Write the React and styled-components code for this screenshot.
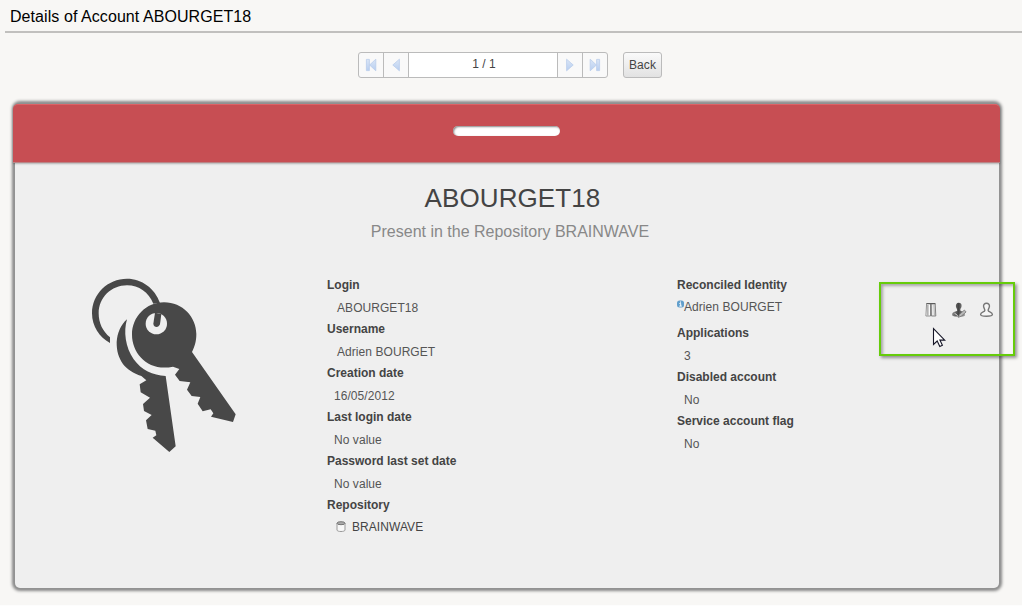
import React from "react";
import styled, { createGlobalStyle } from "styled-components";

const GlobalStyle = createGlobalStyle`
  * { box-sizing: border-box; }
  html, body { margin: 0; padding: 0; }
  body {
    background: #f8f7f5;
    font-family: "Liberation Sans", Arial, sans-serif;
    overflow: hidden;
  }
`;

const Page = styled.div`
  position: relative;
  display: flex;
  flex-direction: column;
  width: 1022px;
  height: 606px;
  overflow: hidden;
  border-bottom: 1px solid #fdfdfd;
`;

const TitleBar = styled.header`
  flex: none;
  height: 33px;
  margin-left: 5px;
  padding: 1px 0 0 5px;
  border-bottom: 2px solid #c1c0be;
  font-size: 16px;
  line-height: 32px;
  letter-spacing: 0.07px;
  color: #000;
  white-space: nowrap;
`;

const Toolbar = styled.nav`
  flex: none;
  display: flex;
  gap: 15px;
  height: 26px;
  margin: 19px 0 0 358px;
`;

const Pager = styled.div`
  display: flex;
  width: 250px;
  border: 1px solid #bbb;
  border-radius: 3px;
  background: #f9f9f9;
  overflow: hidden;
`;

const PagerButton = styled.button`
  display: flex;
  align-items: center;
  justify-content: center;
  width: 24px;
  padding: 0;
  border: 0;
  background: transparent;
`;

const PageCount = styled.div`
  flex: 1;
  padding-left: 2px;
  border: solid #bbb;
  border-width: 0 1px;
  background: #fff;
  color: #444;
  font-size: 12px;
  line-height: 23px;
  text-align: center;
`;

const Separator = styled.div`
  width: 1px;
  background: #bbb;
`;

const BackButton = styled.button`
  width: 39px;
  padding: 0;
  border: 1px solid #bbb;
  border-radius: 3px;
  background: linear-gradient(#fafafa, #e2e2e2);
  color: #444;
  font: 12px/23px "Liberation Sans", Arial, sans-serif;
  letter-spacing: 0.1px;
`;

const Card = styled.section`
  flex: none;
  width: 984px;
  height: 484px;
  margin: 26px 0 0 15px;
  border-radius: 5px;
  background: #efefef;
  box-shadow: 0 0 0 1px #929292, 0 0 3px 3px #888;
`;

const Banner = styled.div`
  display: flex;
  justify-content: center;
  height: 59px;
  margin: 0 -1px 0 -2px;
  padding-top: 21px;
  border-top: 1px solid #dc6266;
  border-bottom: 1px solid #b98587;
  border-radius: 5px 5px 0 0;
  background: #c74e53;
  box-shadow: 0 1px 2px rgba(0, 0, 0, 0.25);
`;

const Slot = styled.div`
  width: 107px;
  height: 10px;
  border-radius: 5px;
  background: #fff;
  box-shadow: inset 1px 1px 2px #888;
`;

const AccountName = styled.h1`
  margin: 20px 0 0;
  padding-left: 11px;
  color: #444;
  font-size: 26px;
  font-weight: 400;
  line-height: 30px;
  letter-spacing: 0.1px;
  text-align: center;
`;

const Subtitle = styled.p`
  margin: 9px 0 0;
  padding-left: 6px;
  color: #888;
  font-size: 16px;
  line-height: 20px;
  text-align: center;
`;

const Details = styled.div`
  display: grid;
  grid-template-columns: 312px 350px 1fr;
  padding-top: 33px;
`;

const KeysCell = styled.div`
  height: 190px;
  padding-left: 65px;
  margin-top: -5px;
`;

const FieldList = styled.dl`
  margin: 0;
  font-size: 12px;
`;

const Label = styled.dt`
  height: 20px;
  color: #444;
  font-weight: 700;
  line-height: 20px;
`;

const Value = styled.dd`
  display: flex;
  align-items: center;
  height: ${(p) => p.$height || 24}px;
  margin: 0;
  padding-top: ${(p) => (p.$lift ? 0 : 2)}px;
  padding-left: ${(p) => (p.$indent === undefined ? 7 : p.$indent)}px;
  padding-bottom: ${(p) => p.$lift || 0}px;
  color: ${(p) => p.$color || "#555"};
  line-height: 24px;
  letter-spacing: 0.06px;
  white-space: nowrap;
`;

const InfoBadge = styled.svg`
  width: 7px;
  height: 8px;
  margin-top: -6px;
`;

const RepoIcon = styled.svg`
  width: 10px;
  height: 11px;
  margin-right: 6px;
`;

const Actions = styled.div`
  position: absolute;
  left: 879px;
  top: 282px;
  display: flex;
  width: 136px;
  height: 74px;
  padding: 17px 0 0 42px;
  gap: 12px;
  border: 2px solid #66cc0a;
  box-shadow: 2px 2px 3px rgba(0, 0, 0, 0.4), inset 2px 2px 3px rgba(0, 0, 0, 0.3);
`;

const ActionIcon = styled.svg`
  width: 16px;
  height: 18px;
`;

const Cursor = styled.svg`
  position: absolute;
  left: 932px;
  top: 327px;
  width: 14px;
  height: 21px;
`;

function PagerArrow({ back, end }) {
  return (
    <svg width="14" height="14" viewBox="0 0 14 14">
      <defs>
        <linearGradient id="arrow" x1="0" y1="0" x2="0" y2="1">
          <stop offset="0" stopColor="#dbe6f6" />
          <stop offset="1" stopColor="#b7cef0" />
        </linearGradient>
      </defs>
      <g
        transform={back ? "matrix(-1 0 0 1 14 0)" : undefined}
        fill="url(#arrow)"
        stroke="#b9cdeb"
        strokeWidth=".8"
      >
        {end ? (
          <>
            <path d="M8.6 1.4H11.6V12.6H8.6Z" />
            <path d="M2.2 1.2L8.4 7L2.2 12.8Z" />
          </>
        ) : (
          <path d="M3.6 1.2L10.2 7L3.6 12.8Z" />
        )}
      </g>
    </svg>
  );
}

function Keys() {
  return (
    <svg width="170" height="190" viewBox="0 0 510 570" fill="#484848">
      <path
        d="M90 202V219C58 202 36 169 36 130C36 72 83 26 141 26C185 26 225 55 240 99L220 101C206 67 177 46 141 46C94 46 56 83 56 130C56 159 68 184 90 202Z"
      />
      <path d="M141 148C130 184 136 232 161 268C185 301 218 316 257 318L287 529L268 546L218 503L229 496L226 482L203 477L198 451L215 435L192 423L189 402L210 383L182 367L179 343L199 331L184 318C137 303 109 270 110 216C112 187 123 164 141 148Z" />
      <path d="M252 97C308 97 349 142 349 192C349 216 343 232 336 246L467 433L459 456L393 440L400 430L392 418L368 424L353 401L361 381L335 378L321 359L331 337L299 333L285 314L298 297L279 290C206 306 156 252 156 194C156 140 199 97 252 97Z" />
      <circle cx="229" cy="161" r="32" fill="#efefef" />
      <path d="M225 128L244 132L240 163C236 174 221 173 220 161Z" />
    </svg>
  );
}

function BooksIcon() {
  return (
    <ActionIcon viewBox="0 0 16 18">
      <path d="M3.6 2.8h4V15H2.9z" fill="#fafafa" stroke="#8a8a8a" strokeWidth=".9" />
      <path d="M8.1 2.8h4.1l.6 12.2H8.4z" fill="#e8e8e8" stroke="#777" strokeWidth=".9" />
      <path d="M7.8 3v12M4.9 4v10.5" stroke="#777" strokeWidth=".9" />
      <path d="M11 4l.5 10.8" stroke="#aaa" strokeWidth=".8" />
      <path d="M3.4 2.6h9" stroke="#555" />
    </ActionIcon>
  );
}

function EditUserIcon() {
  return (
    <ActionIcon viewBox="0 0 16 18">
      <defs>
        <linearGradient id="user">
          <stop stopColor="#888" />
          <stop offset=".5" stopColor="#444" />
          <stop offset="1" stopColor="#aaa" />
        </linearGradient>
      </defs>
      <path
        d="M7.6 1.7c2.3 0 3.3 1.5 3 3.5-.2 1.7-1.5 2.5-1.3 4 .4 1.3 4.8 1.1 4.8 4.7 0 1.3-1.5 1.7-6 1.7s-7 0-7-2.1c0-3.2 4.8-2.5 5.1-4 .2-1.3-1.2-2.4-1.3-4-.1-2 .6-3.8 2.7-3.8z"
        fill="url(#user)"
      />
      <path d="M7.3 16.4l1.1-3 5-4.3 1.7 1.9-4.9 4.2z" fill="#bbb" stroke="#777" strokeWidth=".8" />
      <path d="M3.5 12.2l3.2 2.4" stroke="#ddd" />
    </ActionIcon>
  );
}

function UserIcon() {
  return (
    <ActionIcon viewBox="0 0 16 18">
      <path
        d="M7.5 2.3c2 0 3.2 1.4 2.9 3.4-.2 1.5-1.4 2.3-1.2 3.9.2 1.5 4.2 1.2 4.2 4 0 1.4-1.5 1.6-5.9 1.6s-5.9-.2-5.9-1.6c0-2.8 4-2.5 4.2-4 .2-1.6-1-2.4-1.2-3.9-.3-2 .9-3.4 2.9-3.4z"
        fill="#f5f5f5"
        stroke="#777"
        strokeWidth="1.4"
      />
    </ActionIcon>
  );
}

export default function App() {
  return (
    <>
      <GlobalStyle />
      <Page>
        <TitleBar>Details of Account ABOURGET18</TitleBar>
        <Toolbar>
          <Pager>
            <PagerButton aria-label="First"><PagerArrow back end /></PagerButton>
            <Separator />
            <PagerButton aria-label="Previous"><PagerArrow back /></PagerButton>
            <PageCount>1 / 1</PageCount>
            <PagerButton aria-label="Next"><PagerArrow /></PagerButton>
            <Separator />
            <PagerButton aria-label="Last"><PagerArrow end /></PagerButton>
          </Pager>
          <BackButton>Back</BackButton>
        </Toolbar>
        <Card>
          <Banner><Slot /></Banner>
          <AccountName>ABOURGET18</AccountName>
          <Subtitle>Present in the Repository BRAINWAVE</Subtitle>
          <Details>
            <KeysCell><Keys /></KeysCell>
            <FieldList>
              <Label>Login</Label>
              <Value $indent={10}>ABOURGET18</Value>
              <Label>Username</Label>
              <Value $indent={10}>Adrien BOURGET</Value>
              <Label>Creation date</Label>
              <Value>16/05/2012</Value>
              <Label>Last login date</Label>
              <Value>No value</Value>
              <Label>Password last set date</Label>
              <Value>No value</Value>
              <Label>Repository</Label>
              <Value $indent={9} $lift={1} $color="#444">
                <RepoIcon viewBox="0 0 10 11">
                  <path d="M1 2v7c0 2 8 2 8 0V2" fill="#f7f7f7" stroke="#999" />
                  <ellipse cx="5" cy="2.2" rx="4" ry="1.5" fill="#aaa" stroke="#777" />
                </RepoIcon>
                BRAINWAVE
              </Value>
            </FieldList>
            <FieldList>
              <Label>Reconciled Identity</Label>
              <Value $indent={0} $height={28} $lift={4}>
                <InfoBadge viewBox="0 0 7 8">
                  <rect y=".5" width="7" height="7" rx="2.5" fill="#629fcc" />
                  <path d="M3.5 1.5v1.2M2.4 3.5h1.3V6M2.3 6.1h2.5" stroke="#fff" fill="none" />
                </InfoBadge>
                Adrien BOURGET
              </Value>
              <Label>Applications</Label>
              <Value>3</Value>
              <Label>Disabled account</Label>
              <Value>No</Value>
              <Label>Service account flag</Label>
              <Value>No</Value>
            </FieldList>
          </Details>
        </Card>
        <Actions>
          <BooksIcon />
          <EditUserIcon />
          <UserIcon />
        </Actions>
        <Cursor viewBox="0 0 14 21">
          <path
            d="M1.5 1.5v16l3.7-3.5 2.6 5.5 2.6-1.2-2.5-5.2h4.8z"
            fill="#fff"
            stroke="#171728"
            strokeWidth="1.1"
          />
        </Cursor>
      </Page>
    </>
  );
}
